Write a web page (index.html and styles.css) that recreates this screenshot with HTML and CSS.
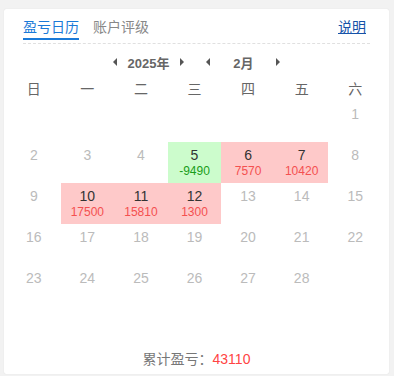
FILE: index.html
```html
<!DOCTYPE html>
<html lang="zh-CN">
<head>
    <meta charset="UTF-8">
    <meta name="viewport" content="width=device-width, initial-scale=1.0">
    <title>盈亏日历</title>
    <link rel="stylesheet" href="styles.css">
</head>
<body>
    <div class="card">
        <div class="tabs">
            <span class="tab active">盈亏日历</span>
            <span class="tab">账户评级</span>
            <a class="help" href="#">说明</a>
        </div>
        <div class="nav">
            <span class="arrow left"></span>
            <span class="year">2025年</span>
            <span class="arrow right gap"></span>
            <span class="arrow left gap2"></span>
            <span class="month">2月</span>
            <span class="arrow right"></span>
        </div>
        <div class="week">
            <span>日</span><span>一</span><span>二</span><span>三</span><span>四</span><span>五</span><span>六</span>
        </div>
        <div class="days">
            <div class="cell"></div><div class="cell"></div><div class="cell"></div><div class="cell"></div><div class="cell"></div><div class="cell"></div>
            <div class="cell"><span class="num">1</span></div>
            <div class="cell"><span class="num">2</span></div>
            <div class="cell"><span class="num">3</span></div>
            <div class="cell"><span class="num">4</span></div>
            <div class="cell loss"><span class="num">5</span><span class="val">-9490</span></div>
            <div class="cell gain"><span class="num">6</span><span class="val">7570</span></div>
            <div class="cell gain"><span class="num">7</span><span class="val">10420</span></div>
            <div class="cell"><span class="num">8</span></div>
            <div class="cell"><span class="num">9</span></div>
            <div class="cell gain"><span class="num">10</span><span class="val">17500</span></div>
            <div class="cell gain"><span class="num">11</span><span class="val">15810</span></div>
            <div class="cell gain"><span class="num">12</span><span class="val">1300</span></div>
            <div class="cell"><span class="num">13</span></div>
            <div class="cell"><span class="num">14</span></div>
            <div class="cell"><span class="num">15</span></div>
            <div class="cell"><span class="num">16</span></div>
            <div class="cell"><span class="num">17</span></div>
            <div class="cell"><span class="num">18</span></div>
            <div class="cell"><span class="num">19</span></div>
            <div class="cell"><span class="num">20</span></div>
            <div class="cell"><span class="num">21</span></div>
            <div class="cell"><span class="num">22</span></div>
            <div class="cell"><span class="num">23</span></div>
            <div class="cell"><span class="num">24</span></div>
            <div class="cell"><span class="num">25</span></div>
            <div class="cell"><span class="num">26</span></div>
            <div class="cell"><span class="num">27</span></div>
            <div class="cell"><span class="num">28</span></div>
        </div>
        <div class="total">累计盈亏：<span class="total-val">43110</span></div>
    </div>
</body>
</html>
```

FILE: styles.css
```css
body {
    margin: 0;
    padding: 9px 5px 2px 4px;
    background-color: #f2f2f2;
    font-family: "Liberation Sans", Arial, "Noto Sans CJK SC", sans-serif;
}
.card {
    width: 385px;
    height: 365px;
    background-color: #fff;
    border-radius: 2px;
    box-shadow: 0 0 1px rgba(0, 0, 0, 0.15);
    display: flex;
    flex-direction: column;
}
.tabs {
    display: flex;
    align-items: flex-end;
    margin: 0 19px;
    padding-top: 8px;
    padding-bottom: 3px;
    border-bottom: 1px dashed #e0e0e0;
}
.tab {
    font-size: 14px;
    line-height: 20px;
    padding-bottom: 1px;
    margin-right: 14px;
    color: #888;
    border-bottom: 2px solid transparent;
}
.tab.active {
    color: #1a7ad8;
    border-bottom-color: #1a7ad8;
}
.help {
    margin-left: auto;
    margin-right: 4px;
    margin-bottom: 3px;
    font-size: 14px;
    line-height: 20px;
    color: #1552a8;
    text-decoration: underline;
}
.nav {
    display: flex;
    justify-content: center;
    align-items: center;
    height: 20px;
    margin-top: 8px;
    font-size: 13px;
    font-weight: bold;
    color: #666;
}
.arrow {
    width: 0;
    height: 0;
    border-top: 4px solid transparent;
    border-bottom: 4px solid transparent;
}
.arrow.left {
    border-right: 4px solid #555;
}
.arrow.right {
    border-left: 4px solid #555;
}
.year {
    margin: 0 11px;
}
.gap2 {
    margin-left: 22px;
}
.month {
    width: 56px;
    margin: 0 5px;
    text-align: center;
}
.week {
    display: grid;
    grid-template-columns: repeat(7, 1fr);
    width: 375px;
    margin: 6px 0 0 3px;
    height: 22px;
    line-height: 22px;
    font-size: 14px;
    color: #666;
    text-align: center;
}
.days {
    display: grid;
    grid-template-columns: repeat(7, 1fr);
    grid-auto-rows: 41px;
    width: 375px;
    margin: 1px 0 0 3px;
}
.cell {
    display: flex;
    flex-direction: column;
    align-items: center;
    padding-top: 4px;
    box-sizing: border-box;
}
.num {
    font-size: 14px;
    line-height: 18px;
    color: #bbb;
}
.val {
    font-size: 12px;
    line-height: 14px;
}
.gain {
    background-color: #fec9c9;
}
.gain .num, .loss .num {
    color: #333;
}
.gain .val {
    color: #f45050;
}
.loss {
    background-color: #ccfccc;
}
.loss .val {
    color: #1a9e1a;
}
.total {
    margin-top: auto;
    padding-bottom: 5px;
    text-align: center;
    font-size: 14px;
    line-height: 20px;
    color: #777;
}
.total-val {
    color: #f44;
}
```
